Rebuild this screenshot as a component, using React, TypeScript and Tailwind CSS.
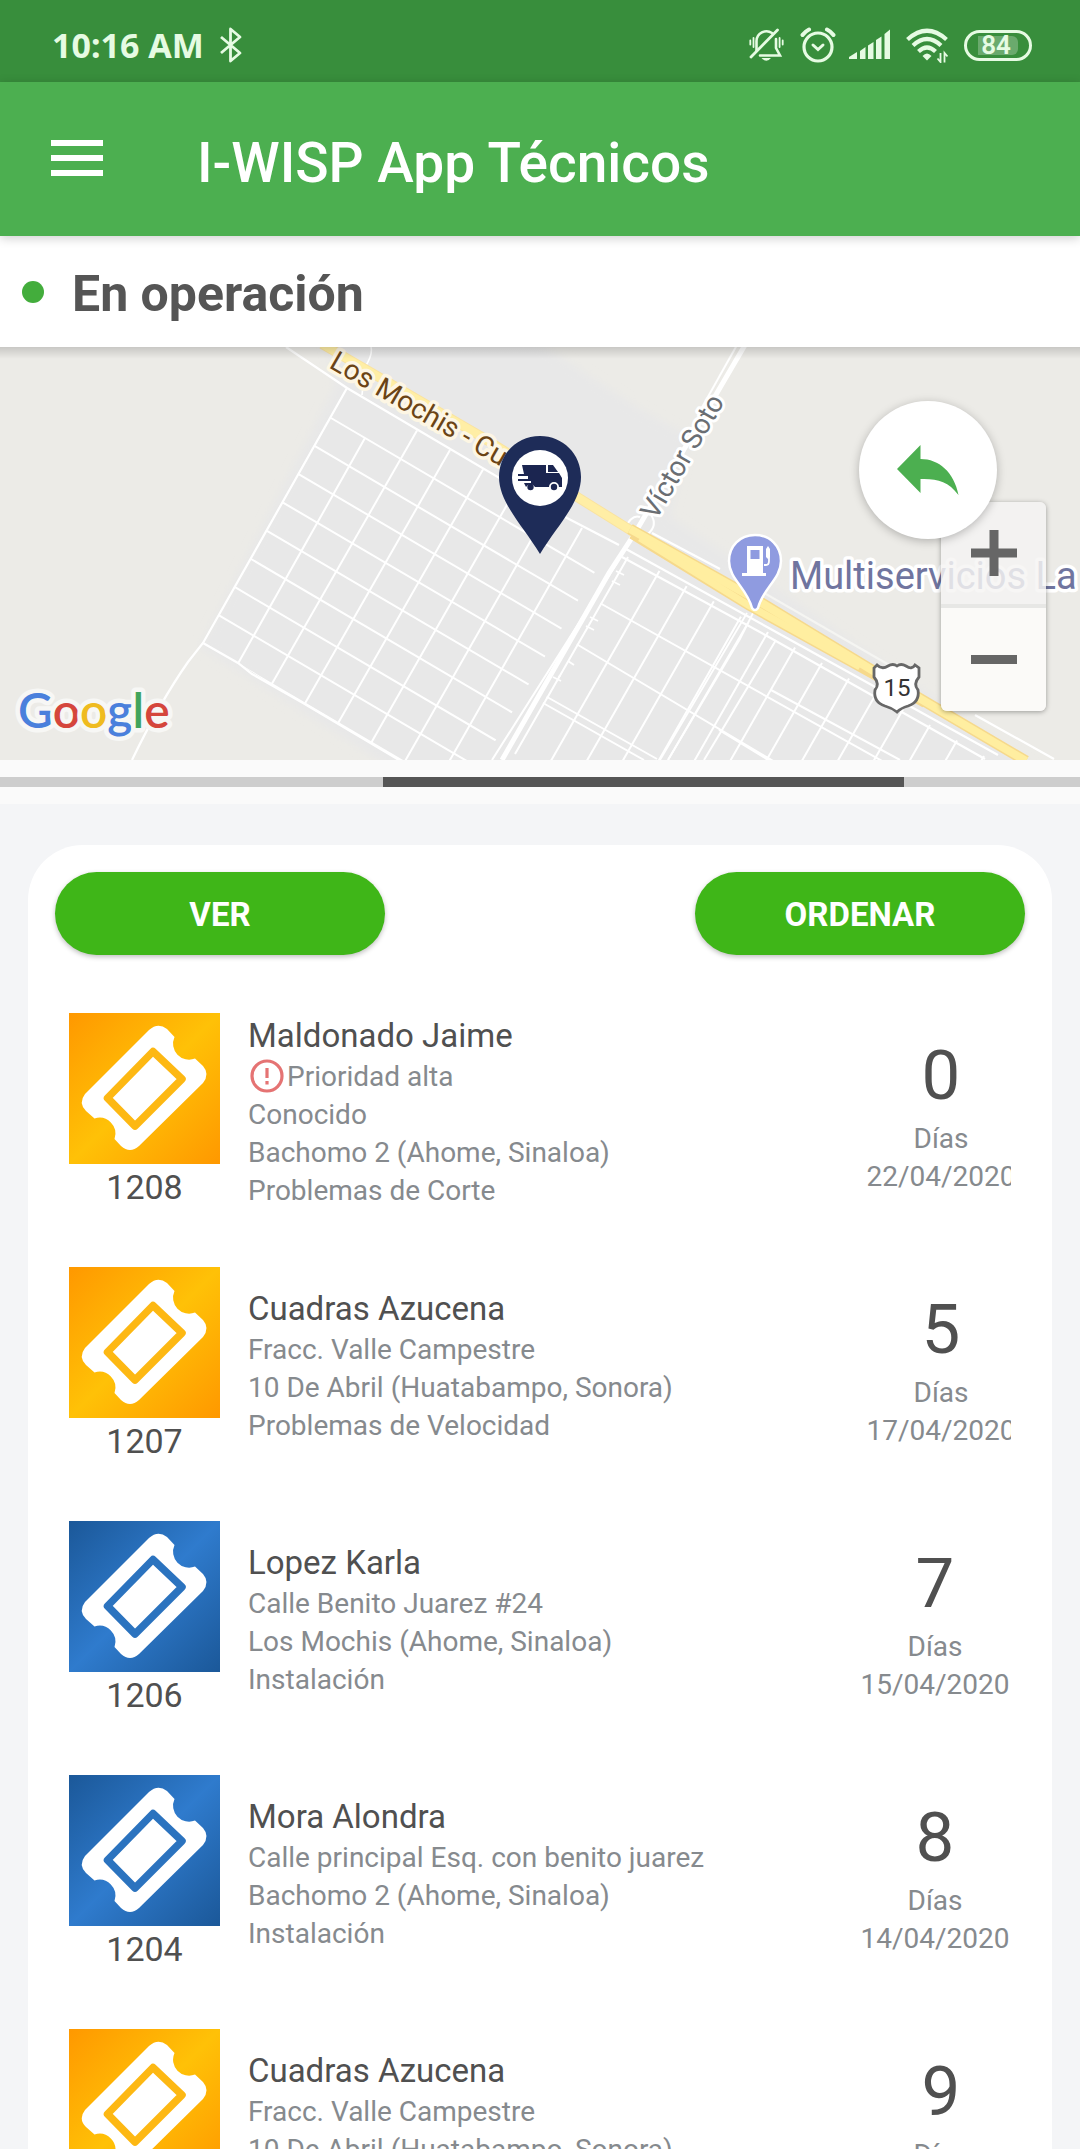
import React from "react";

type Ticket = {
  id: string;
  name: string;
  lines: string[];
  days: number;
  date: string;
  color: "yellow" | "blue";
  highPriority?: boolean;
  wide?: boolean;
};

const tickets: Ticket[] = [
  {
    id: "1208",
    name: "Maldonado Jaime",
    lines: ["Conocido", "Bachomo 2 (Ahome, Sinaloa)", "Problemas de Corte"],
    days: 0,
    date: "22/04/2020",
    color: "yellow",
    highPriority: true,
    wide: true,
  },
  {
    id: "1207",
    name: "Cuadras Azucena",
    lines: ["Fracc. Valle Campestre", "10 De Abril (Huatabampo, Sonora)", "Problemas de Velocidad"],
    days: 5,
    date: "17/04/2020",
    color: "yellow",
    wide: true,
  },
  {
    id: "1206",
    name: "Lopez Karla",
    lines: ["Calle Benito Juarez #24", "Los Mochis (Ahome, Sinaloa)", "Instalación"],
    days: 7,
    date: "15/04/2020",
    color: "blue",
  },
  {
    id: "1204",
    name: "Mora Alondra",
    lines: ["Calle principal Esq. con benito juarez", "Bachomo 2 (Ahome, Sinaloa)", "Instalación"],
    days: 8,
    date: "14/04/2020",
    color: "blue",
  },
  {
    id: "1203",
    name: "Cuadras Azucena",
    lines: ["Fracc. Valle Campestre", "10 De Abril (Huatabampo, Sonora)", "Problemas de Velocidad"],
    days: 9,
    date: "13/04/2020",
    color: "yellow",
    wide: true,
  },
];

function StatusBar() {
  return (
    <div className="flex h-[82px] shrink-0 items-center justify-between bg-[#388e3c] pt-2 pr-12 pl-[52px] text-[#e6fbe3]">
      <div className="flex items-center gap-4">
        <span className="font-['Noto_Sans'] text-[34px] leading-[40px] font-bold">10:16 AM</span>
        <svg width="22" height="36" viewBox="0 0 22 36" fill="none" stroke="currentColor" strokeWidth="2.8">
          <path d="M1 10 L20 26 L10.500 34 V2 L20 10 L1 26" strokeLinejoin="round" />
        </svg>
      </div>

      <div className="flex items-center">
        {/* bell off */}
        <svg className="mr-4" width="35" height="36" viewBox="0 0 35 36" fill="none" stroke="currentColor" strokeWidth="2.600" strokeLinecap="round">
          <path d="M7.500 24 V14 A10 10 0 0 1 23 6" />
          <path d="M27 12 V21 L31 28.500 H11" />
          <path d="M2 30 L28.500 3" strokeWidth="2.800" />
          <path d="M12.500 31 H22 Q17.500 36.500 12.500 31 Z" fill="currentColor" stroke="none" />
          <path d="M4.500 11 V20 M1.300 13.500 V17.500 M30.600 11 V20 M33.700 13.500 V17.500" strokeWidth="1.800" />
        </svg>
        {/* alarm */}
        <svg className="mr-[13px]" width="36" height="36" viewBox="0 0 36 36" fill="none" stroke="currentColor" strokeLinecap="round">
          <circle cx="18" cy="20" r="14" strokeWidth="3.200" />
          <path d="M13 18 L18 22.500 L23 18" strokeWidth="3" />
          <path d="M2.500 8 Q5 4.500 9 2.500 M33.500 8 Q31 4.500 27 2.500" strokeWidth="4" />
        </svg>
        {/* signal */}
        <svg className="mr-4" width="41" height="36" viewBox="0 0 41 36" fill="currentColor">
          <path d="M0 32 V30 L8 25 V32 Z" />
          <path d="M11 24 L16.500 20 V32 H11 Z" />
          <path d="M19 18.500 L24.500 15 V32 H19 Z" />
          <path d="M27 13 L32.500 9.500 V32 H27 Z" />
          <path d="M35.500 7 L41 2.500 V32 H35.500 Z" />
        </svg>
        {/* wifi */}
        <svg className="mr-4" width="42" height="36" viewBox="0 0 42 36" fill="none" stroke="currentColor" strokeWidth="4.200">
          <path d="M1.500 12.500 Q21 -5 40.500 12.500" />
          <path d="M7 18.500 Q21 5.500 35 18.500" />
          <path d="M12.500 24.500 Q21 16.500 29.500 24.500" />
          <path d="M16.500 29 Q21 24 25.500 29 L21 33.500 Z" fill="currentColor" stroke="none" />
          <path d="M34.500 26 V35 L31.500 31.500 M38.500 35.500 V26 L41.500 29.500" strokeWidth="1.800" />
        </svg>
        <div className="flex h-[31px] w-[68px] items-center rounded-full border-[3px] border-current px-[11px]">
          <div className="flex h-[19px] w-full items-center justify-center rounded-r-md bg-white/25 pr-1 font-['Roboto'] text-[26px] leading-none font-semibold">
            84
          </div>
        </div>
      </div>
    </div>
  );
}

function Header() {
  return (
    <header className="relative z-10 flex h-[154px] shrink-0 items-center bg-[#4caf50] pl-[51px] shadow-[0_2px_10px_rgba(0,0,0,0.2)]">
      <button aria-label="Menú" className="mb-0.5 flex w-[52px] flex-col gap-[9px]">
        <span className="h-[6px] w-full bg-white" />
        <span className="h-[6px] w-full bg-white" />
        <span className="h-[6px] w-full bg-white" />
      </button>
      <h1 className="ml-[94px] pt-2 text-[55px] leading-[64px] font-medium text-white">I-WISP App Técnicos</h1>
    </header>
  );
}

const range = (n: number) => Array.from({ length: n }, (_, i) => i);

function MapCanvas() {
  return (
    <svg className="block w-full" viewBox="0 0 1080 413" fontFamily="Roboto, sans-serif">
      <defs>
        <clipPath id="west">
          <path d="M347 41 L567 171 L612 196 L484 413 L399 413 L303 356 L269 336 L238 316 L203 296 Z" />
        </clipPath>
        <clipPath id="east">
          <path d="M629 207 L998 413 L510 413 Z" />
        </clipPath>
        <filter id="soft">
          <feGaussianBlur stdDeviation="4" />
        </filter>
      </defs>
      <rect width="1080" height="413" fill="#ecebe7" />
      <path
        d="M325 -10 L530 -10 L640 62 L690 90 L670 170 L760 230 L1040 425 L398 425 L200 300 L335 40 Z"
        fill="#e8e8e8"
        filter="url(#soft)"
      />

      {/* west blocks */}
      <g clipPath="url(#west)" stroke="#fff" strokeWidth="2">
        {range(15).map((i) => (
          <line key={i} x1={331 - 16 * i} y1={71 + 28.200 * i} x2={731 - 16 * i} y2={306 + 28.200 * i} />
        ))}
        {range(9).map((j) => (
          <line
            key={j}
            x1={j === 0 ? 365 : 384 + 33 * j}
            y1={j === 0 ? 91 : 64 + 19.500 * j}
            x2={238 + 33 * j - 56}
            y2={316 + 20 * j + 100}
          />
        ))}
      </g>
      {/* east blocks */}
      <g clipPath="url(#east)" stroke="#fff" strokeWidth="2">
        <path d="M598 255 L900 424 M573 295 L790 424 M540 346 L657 412 M536 352 L644 413 M719 383 L780 420 M771 343 L900 413" />
        {range(13).map((j) => (
          <line key={j} x1={660 + 27 * j} y1={223 + 15.500 * j} x2={540 + 27 * j} y2={433 + 15.500 * j} />
        ))}
        <path d="M748 276 L668 413 M776 293 L704 413 M555 325 L560 330 M568 314 L574 318" />
      </g>

      <g fill="none" stroke="#fff" strokeWidth="2.200">
        <path d="M286 0 L347 41 L567 171 L619 198" />
        <path d="M371 0 Q373 8 365 20 L362 48" strokeWidth="1.600" />
        <path d="M347 41 L203 296 L188 315 Q160 355 132 413" />
        <path d="M203 296 L238 316 L252 327 L303 356 L399 413" />
        <path d="M626 202 L767 280 L998 408" />
        <path d="M622 210 L767 289 L985 412" />
        <path d="M652 186 L720 222 M975 368 L1054 412" />
        <path d="M740 232 L910 330" stroke="#f5f5f2" />
        <path d="M753 266 L740 292 L668 413 M747 266 L660 413" strokeWidth="1.800" />
      </g>

      {/* Víctor Soto avenue */}
      <g fill="none" stroke="#fff">
        <path d="M745 -2 L635 186 L609 226 L502 413" strokeWidth="5" />
        <path d="M737 -2 L700 64" strokeWidth="2" />
        <path d="M617 216 L492 413 M628 210 L515 407" strokeWidth="2" />
        <path d="M616 224 l8 4 M612 234 l8 4 M590 270 l8 4 M586 279 l8 4 M553 330 l8 4" strokeWidth="1.800" />
        <path d="M625 181 Q632 167 640 170 M651 168 Q658 178 648 187 L638 185" strokeWidth="2" />
      </g>

      {/* highway */}
      <g fill="none">
        <path d="M322 -3 L482 90 L574 148 L635 186" stroke="#fae3a0" strokeWidth="10" />
        <path d="M322 -3 L482 90 L574 148 L635 186" stroke="#ffeea5" strokeWidth="8" />
        <path d="M630 182 L755 252 L880 328 L1026 414" stroke="#f6d98c" strokeWidth="11" />
        <path d="M632 187 L748 258 L860 320 L925 356" stroke="#f6d98c" strokeWidth="10" />
        <path d="M630 182 L755 252 L880 328 L1026 414" stroke="#ffeea0" strokeWidth="8" />
        <path d="M640 191 L748 258 L860 320" stroke="#ffeea0" strokeWidth="7" />
      </g>

      <g paintOrder="stroke" strokeLinejoin="round">
        <text transform="translate(328 20) rotate(30)" fontSize="28" fill="#6b4415" stroke="#fdf6e4" strokeWidth="7">
          Los Mochis - Cu
        </text>
        <text transform="translate(656 174) rotate(-60)" fontSize="28" fill="#6a6e73" stroke="#fff" strokeWidth="6">
          Víctor Soto
        </text>
        <text x="790" y="242" fontSize="38" fill="#70759f" stroke="#fff" strokeWidth="7">
          Multiservicios La
        </text>
        <text x="18" y="381" fontSize="48" fontFamily="Lato, sans-serif" fontWeight="600" stroke="#f7f7f5" strokeWidth="9">
          <tspan fill="#4a80dc">G</tspan>
          <tspan fill="#d5463c">o</tspan>
          <tspan fill="#efbb20">o</tspan>
          <tspan fill="#4a80dc">g</tspan>
          <tspan fill="#41a45c">l</tspan>
          <tspan fill="#d5463c">e</tspan>
        </text>
      </g>

      {/* gas station */}
      <path
        d="M755 188 C770 188 781 199 781 214 C781 232 763 241 758 261 Q755 265 752 261 C747 241 729 232 729 214 C729 199 740 188 755 188 Z"
        fill="#8f9be0"
        stroke="#fff"
        strokeWidth="2.500"
      />
      <path d="M747 199 H763 V226 H766 V229 H742 V226 H747 Z M750.500 203 V212 H759.500 V203 Z" fill="#fff" fillRule="evenodd" />
      <path d="M764 218 h2 q3 0 3 -4 v-6" fill="none" stroke="#fff" strokeWidth="1.800" />
      <path d="M766 202 l2 -3 l2 3 v8 l-2 2 l-2 -2 Z" fill="#fff" />

      {/* route shield */}
      <path
        d="M877 318 Q882 323 888 319 Q893 316 897 319 Q901 316 906 319 Q912 323 915 318 L919 321 V330 Q913 337 918 343 Q920 355 908 359 Q901 361 897 365 Q892 361 885 359 Q873 355 875 343 Q880 337 874 330 V321 Z"
        fill="#fff"
        stroke="#676767"
        strokeWidth="2.800"
      />
      <text x="897" y="349" fontSize="24" textAnchor="middle" fill="#333">
        15
      </text>

      {/* technician marker */}
      <path d="M540 89 C563 89 581 107 581 130 C581 156 556 180 540 207 C524 180 499 156 499 130 C499 107 517 89 540 89 Z" fill="#1e2c58" />
      <circle cx="540" cy="131" r="28" fill="#fff" />
      <g fill="#1b2550">
        <path d="M522 118 H546 V126 H559 L562 131 V140 H559 A5 5 0 0 0 549 140 H535 A5 5 0 0 0 526 140 L524 136 H531 V134 H518 V132 H528 V129 H518 V127 H524 Z" />
        <path d="M548 118 H553 L558 125 H548 Z" />
        <circle cx="530.500" cy="140" r="3.200" />
        <circle cx="554" cy="140" r="3.200" />
      </g>
    </svg>
  );
}

function MapView() {
  return (
    <section className="relative shrink-0">
      <MapCanvas />
      <div className="absolute inset-x-0 top-0 h-3 bg-linear-to-b from-black/15 to-transparent" />
      <div className="absolute top-[155px] right-[34px] flex w-[105px] flex-col gap-1 rounded-md bg-[#e4e4e4]/60 shadow-[0_1px_5px_rgba(0,0,0,0.35)]">
        <button aria-label="Acercar" className="flex h-[102px] items-center justify-center rounded-t-md bg-[#fbfaf8]/60">
          <svg width="46" height="46" viewBox="0 0 46 46" fill="#666">
            <path d="M18.500 0 H27.500 V18.500 H46 V27.500 H27.500 V46 H18.500 V27.500 H0 V18.500 H18.500 Z" />
          </svg>
        </button>
        <button aria-label="Alejar" className="flex h-[103px] items-center justify-center rounded-b-md bg-[#fbfaf8]">
          <span className="h-[9px] w-[46px] bg-[#666]" />
        </button>
      </div>
      <button
        aria-label="Volver"
        className="absolute top-[54px] right-[83px] flex size-[138px] items-center justify-center rounded-full bg-white shadow-[0_2px_10px_rgba(0,0,0,0.25)]"
      >
        <svg width="62" height="50" viewBox="0 0 62 50" fill="#4caf50">
          <path d="M0 24 L23.500 0 V14 C42 14 57 27 61.500 50 C51 36 40 33.500 23.500 34 V48 Z" />
        </svg>
      </button>
    </section>
  );
}

function TicketIcon({ color }: { color: "yellow" | "blue" }) {
  const bg =
    color === "yellow"
      ? "bg-linear-to-br from-[#ff9800] via-[#ffc107] to-[#ff9800]"
      : "bg-linear-to-br from-[#1b5899] via-[#2f7bcd] to-[#1b5899]";
  return (
    <div className={`size-[151px] ${bg}`}>
      <svg viewBox="0 0 151 151">
        <path
          d="M80 17 Q89 9 98 16 L105.500 24 A16 16 0 0 0 126 45.500 L134 53 Q141 61 134 70 L70 133 Q61 141 52 133 L45.500 126 A16 16 0 0 0 25.500 105.500 L17 98 Q9 90 16 81 Z"
          fill="#fff"
        />
        <path
          d="M84 38.500 L113 66 L66 113 L38.500 85 Z"
          fill="none"
          stroke={color === "yellow" ? "#fdb813" : "#2b73bf"}
          strokeWidth="7.500"
          strokeLinejoin="round"
        />
      </svg>
    </div>
  );
}

function TicketRow({ ticket }: { ticket: Ticket }) {
  return (
    <li className="flex items-center overflow-hidden pb-14">
      <div className="flex shrink-0 flex-col items-center">
        <TicketIcon color={ticket.color} />
        <span className="text-[34px] leading-[47px] text-[#505050]">{ticket.id}</span>
      </div>
      <div className="ml-7 min-w-0 flex-1 text-[28px] leading-[38px] text-[#868a8e]">
        <h2 className="text-[33px] leading-[44px] text-[#505050]">{ticket.name}</h2>
        {ticket.highPriority && (
          <p className="flex items-center">
            <svg width="39" height="38" viewBox="0 0 39 38" fill="none" stroke="#e57373" strokeWidth="3.200">
              <circle cx="19" cy="18" r="15" />
              <path d="M19 10 V20 M19 23 V26.500" />
            </svg>
            Prioridad alta
          </p>
        )}
        {ticket.lines.map((line) => (
          <p key={line}>{line}</p>
        ))}
      </div>
      <div
        className={`w-[152px] shrink-0 text-center text-[28px] leading-[38px] text-[#868a8e] ${ticket.wide ? "-mr-1.5" : ""}`}
      >
        <p className="pt-1 text-[69px] leading-[88px] text-[#505050]">{ticket.days}</p>
        <p>Días</p>
        <p>{ticket.date}</p>
      </div>
    </li>
  );
}

export default function App() {
  const buttonClass =
    "h-[83px] w-[330px] rounded-full bg-[#3fb618] pt-0.5 text-[33px] font-bold text-white shadow-[0_2px_5px_rgba(0,0,0,0.25)]";

  return (
    <div className="flex h-screen flex-col bg-[#f4f5f7] font-['Roboto',sans-serif]">
      <StatusBar />
      <Header />
      <div className="flex h-[111px] shrink-0 items-center gap-7 bg-white pl-[22px]">
        <span className="size-[22px] rounded-full bg-[#43ad3c]" />
        <span className="pt-1 text-[50px] leading-[60px] font-bold text-[#555]">En operación</span>
      </div>
      <MapView />
      <div className="shrink-0 bg-[#fafafa] py-[17px]">
        <div className="h-[10px] bg-[#cdcdcd]">
          <div className="ml-[35.5%] h-full w-[48.2%] bg-[#555]" />
        </div>
      </div>

      <main className="min-h-0 flex-1 overflow-y-auto px-7 pt-[41px] [scrollbar-width:none]">
        <div className="rounded-[55px] bg-white px-[27px] pt-[27px]">
          <div className="flex justify-between">
            <button className={buttonClass}>VER</button>
            <button className={buttonClass}>ORDENAR</button>
          </div>
          <ul className="mt-[58px] pr-[14px] pl-[14px]">
            {tickets.map((ticket) => (
              <TicketRow key={ticket.id} ticket={ticket} />
            ))}
          </ul>
        </div>
      </main>
    </div>
  );
}
